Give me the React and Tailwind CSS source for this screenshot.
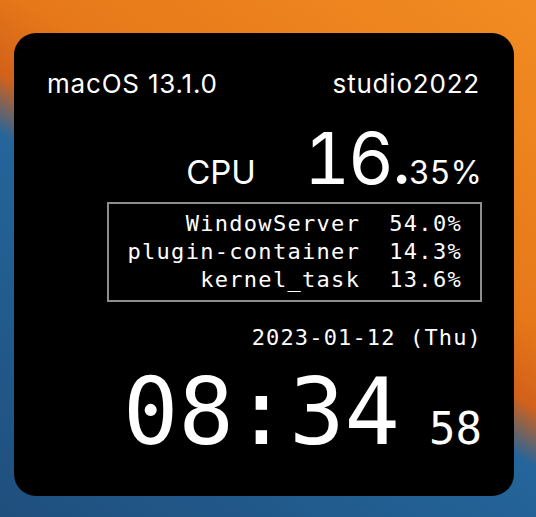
export default function App() {
  const mono = "font-['DejaVu_Sans_Mono',monospace]";
  return (
    <div className="w-[536px] h-[517px] overflow-hidden bg-[linear-gradient(212deg,#f28c22_0%,#e67819_38%,#d2611a_48%,#24659b_55%,#1f4f7d_100%)] pt-[33px] pl-[14px]">
      <div className="w-[500px] h-[463px] rounded-[22px] bg-black text-white flex flex-col items-end px-[32px] pt-[35px]">
        <div className="w-full flex justify-between font-['Inter',sans-serif] text-[26px] leading-[32px] tracking-[0.8px] pl-[1px] pr-[2px]">
          <span>macOS 13.1.0</span>
          <span>studio2022</span>
        </div>
        <div className="mt-[23px] flex items-baseline font-['Inter',sans-serif] leading-none h-[70px]">
          <span className="text-[33px]">CPU</span>
          <span className="ml-[48px] text-[71px] tabular-nums tracking-[-2px]">16.</span>
          <span className="text-[32px] tabular-nums">35%</span>
        </div>
        <div className={`mt-[9px] border-2 border-[#8e8e8e] pl-[18px] pr-[18px] py-[6px] ${mono} text-[22px] leading-[28px] tracking-[1.3px] whitespace-pre text-right`}>
          <div>WindowServer  54.0%</div>
          <div>plugin-container  14.3%</div>
          <div>kernel_task  13.6%</div>
        </div>
        <div className={`mt-[22px] ${mono} text-[22px] leading-[28px] tracking-[1.15px] whitespace-pre`}>
          2023-01-12 (Thu)
        </div>
        <div className={`mt-[15px] flex items-baseline ${mono} leading-none`}>
          <span className="text-[92px]">08:34</span>
          <span className="ml-[29px] text-[44px]">58</span>
        </div>
      </div>
    </div>
  );
}
